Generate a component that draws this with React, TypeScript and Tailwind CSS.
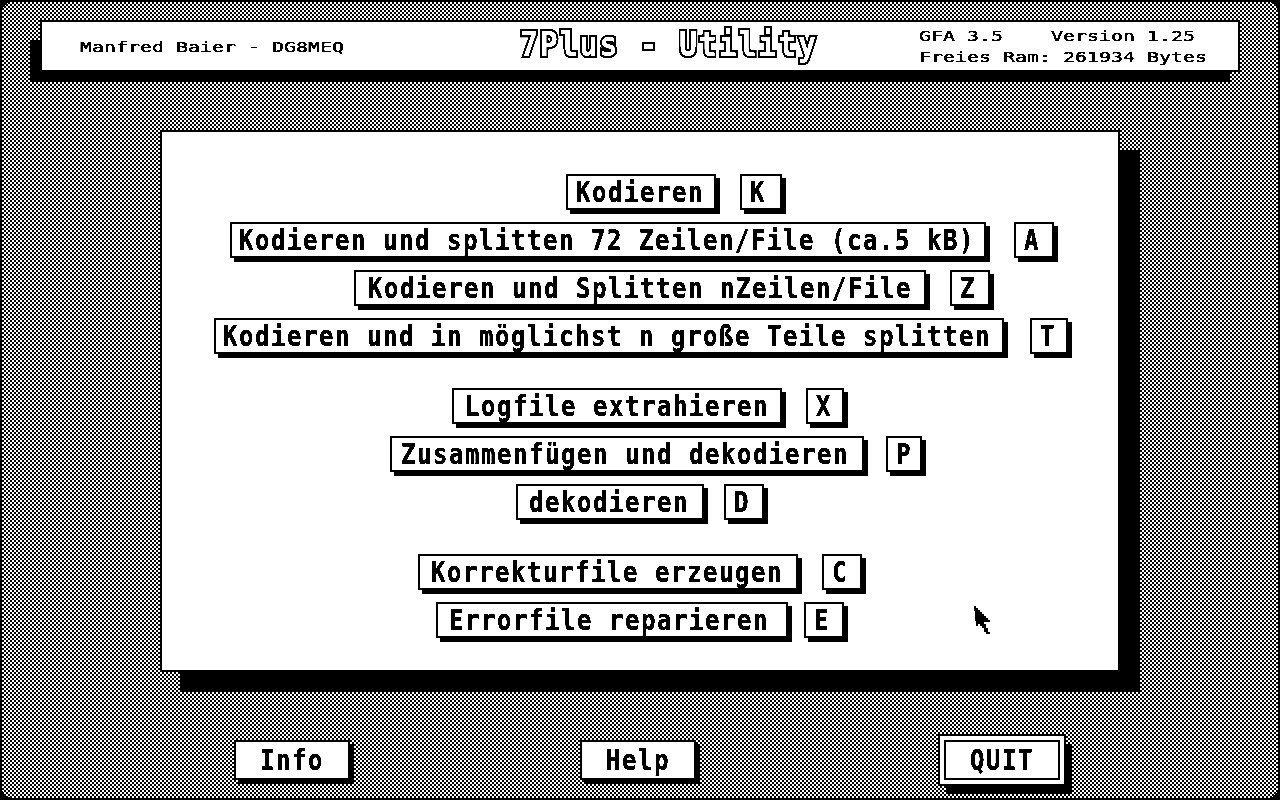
const MONO = "font-['DejaVu_Sans_Mono',monospace]";

type Row = {
  label: string;
  hotkey: string;
  rowClass: string;
  labelClass: string;
  keyClass: string;
};

const ROWS: Row[] = [
  { label: "Kodieren", hotkey: "K", rowClass: "ml-[404px] gap-[24px]", labelClass: "w-[150px] pl-[8px]", keyClass: "w-[42px]" },
  { label: "Kodieren und splitten 72 Zeilen/File (ca.5 kB)", hotkey: "A", rowClass: "ml-[68px] gap-[28px]", labelClass: "w-[756px] pl-[7px]", keyClass: "w-[40px]" },
  { label: "Kodieren und Splitten nZeilen/File", hotkey: "Z", rowClass: "ml-[192px] gap-[24px]", labelClass: "w-[572px] pl-[12px]", keyClass: "w-[40px]" },
  { label: "Kodieren und in möglichst n große Teile splitten", hotkey: "T", rowClass: "ml-[52px] gap-[26px] mb-[22px]", labelClass: "w-[790px] pl-[7px]", keyClass: "w-[38px]" },
  { label: "Logfile extrahieren", hotkey: "X", rowClass: "ml-[290px] gap-[24px]", labelClass: "w-[330px] pl-[11px]", keyClass: "w-[38px]" },
  { label: "Zusammenfügen und dekodieren", hotkey: "P", rowClass: "ml-[228px] gap-[22px]", labelClass: "w-[474px] pl-[9px]", keyClass: "w-[36px]" },
  { label: "dekodieren", hotkey: "D", rowClass: "ml-[354px] gap-[20px] mb-[22px]", labelClass: "w-[188px] pl-[11px]", keyClass: "w-[40px]" },
  { label: "Korrekturfile erzeugen", hotkey: "C", rowClass: "ml-[256px] gap-[24px]", labelClass: "w-[380px] pl-[11px]", keyClass: "w-[40px]" },
  { label: "Errorfile reparieren", hotkey: "E", rowClass: "ml-[274px] gap-[16px]", labelClass: "w-[352px] pl-[11px]", keyClass: "w-[40px]" },
];

// tall narrow letters of the 8x16 system font
function Label({ text }: { text: string }) {
  return (
    <span className="inline-block origin-center scale-y-[1.2] whitespace-pre text-[24px] font-bold leading-none tracking-[1.55px] [-webkit-text-stroke:0.3px_#000]">
      {text}
    </span>
  );
}

function Btn({ text, className }: { text: string; className: string }) {
  return (
    <div className={`h-9 flex items-center border-2 border-black bg-white shadow-[4px_4px_0_0_#000] ${className}`}>
      <Label text={text} />
    </div>
  );
}

function Arrow() {
  return (
    <svg
      className="absolute left-[812px] top-[474px]"
      width="16"
      height="28"
      viewBox="0 0 16 28"
      shapeRendering="crispEdges"
    >
      <path d="M0 0h2v2h2v2h2v2h2v2h2v2h2v2h2v2h2v2h-6v2h2v4h2v4h2v2h-4v-2h-2v-4h-2v-2h-2v-2h-2v2h-2z" fill="#000" />
    </svg>
  );
}

function SmallLine({ text }: { text: string }) {
  return (
    <p className="origin-left scale-x-[1.375] whitespace-pre text-[14.5px] leading-none [-webkit-text-stroke:0.35px_#000]">
      {text}
    </p>
  );
}

export default function App() {
  return (
    <div className={`w-[1280px] h-[800px] overflow-hidden bg-black p-[2px] text-black contrast-[20] ${MONO}`}>
      <div className="isolate h-full flex flex-col rounded-[10px] pt-[18px] bg-[repeating-conic-gradient(#000_0_25%,#fff_0_50%)] bg-[length:4px_4px]">
        {/* Title bar */}
        <div className="relative ml-[38px] w-[1200px] h-[52px] shrink-0 flex items-center border-2 border-black bg-white">
          <div className="absolute -left-[12px] top-[18px] w-[1200px] h-[42px] bg-black -z-10" />
          <div className="w-[477px] pl-[38px] pt-[2px]">
            <SmallLine text="Manfred Baier - DG8MEQ" />
          </div>
          <div className="w-[400px] pl-[1px]">
            <h1 className="inline-block scale-y-[1.1] text-[30px] font-bold leading-none tracking-[1.8px] text-white [-webkit-text-stroke:4px_#000] [paint-order:stroke_fill]">
              7Plus - Utility
            </h1>
          </div>
          <div className="flex flex-col gap-[7px] pt-[1px]">
            <SmallLine text="GFA 3.5    Version 1.25" />
            <SmallLine text="Freies Ram: 261934 Bytes" />
          </div>
        </div>

        {/* Main menu */}
        <div className="relative ml-[158px] mt-[58px] w-[960px] h-[542px] shrink-0 border-2 border-black bg-white pt-[42px] shadow-[20px_20px_0_0_#000]">
          <div className="flex flex-col gap-3">
            {ROWS.map((row) => (
              <div key={row.hotkey} className={`flex ${row.rowClass}`}>
                <Btn text={row.label} className={row.labelClass} />
                <Btn text={row.hotkey} className={`pl-[8px] ${row.keyClass}`} />
              </div>
            ))}
          </div>
          <Arrow />
        </div>

        {/* Bottom buttons */}
        <div className="flex items-start mt-[62px]">
          <div className="ml-[232px] mt-[6px] w-[116px] h-10 flex items-center justify-center border-2 border-black bg-white shadow-[4px_4px_0_0_#000]">
            <Label text="Info" />
          </div>
          <div className="ml-[230px] mt-[6px] w-[116px] h-10 flex items-center justify-center border-2 border-black bg-white shadow-[4px_4px_0_0_#000]">
            <Label text="Help" />
          </div>
          <div className="ml-[242px] border-2 border-black bg-white p-1 shadow-[7px_9px_0_-1px_#000]">
            <div className="w-[116px] h-10 flex items-center justify-center border-2 border-black">
              <Label text="QUIT" />
            </div>
          </div>
        </div>
      </div>
    </div>
  );
}
